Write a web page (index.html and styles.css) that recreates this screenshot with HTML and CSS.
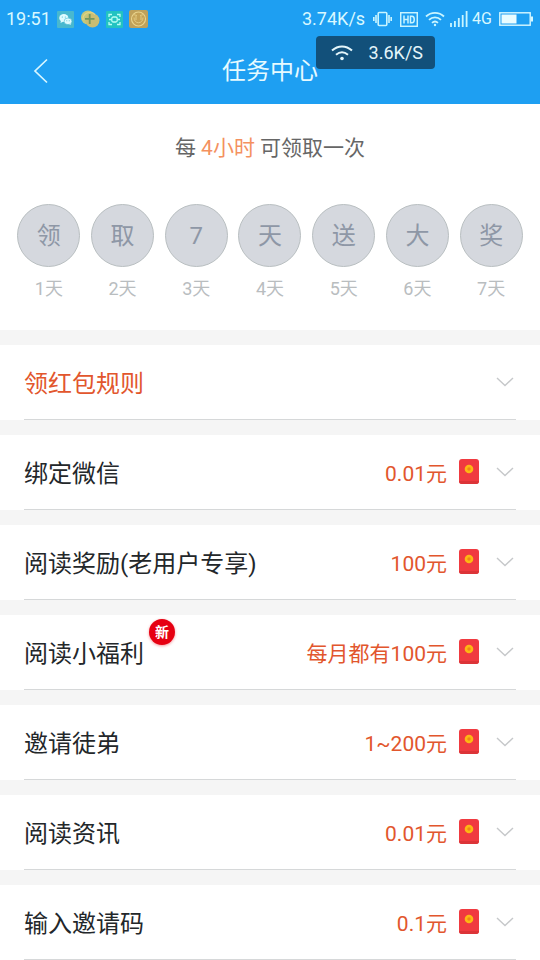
FILE: index.html
```html
<!DOCTYPE html>
<html lang="zh-CN">
<head>
<meta charset="utf-8">
<meta name="viewport" content="width=device-width, initial-scale=1">
<title>任务中心</title>
<link rel="stylesheet" href="styles.css">
</head>
<body>
<svg class="defs" aria-hidden="true">
  <symbol id="packet" viewBox="0 0 20 26">
    <rect width="20" height="25" rx="3" fill="#f03a40"/>
    <path d="M0 22v0a3 3 0 0 0 3 3h14a3 3 0 0 0 3-3v0z" fill="#dc3438"/>
    <circle cx="10" cy="10" r="4.3" fill="#fdb813"/>
    <circle cx="10" cy="10" r="1.7" fill="#f08a14"/>
  </symbol>
  <symbol id="chevron" viewBox="0 0 18 10">
    <path d="M1 1l8 7.5L17 1" fill="none" stroke="#c6c8ca" stroke-width="1.4"/>
  </symbol>
</svg>

<header class="top">
  <div class="status">
    <span class="clock">19:51</span>
    <div class="apps">
      <svg width="17" height="17" viewBox="0 0 17 17"><rect width="17" height="17" rx="1" fill="#48b8cf"/><ellipse cx="6.8" cy="7" rx="4.6" ry="4" fill="#dffbff"/><path d="M4 9.5L3.5 12l3-1.5z" fill="#dffbff"/><ellipse cx="11" cy="10.3" rx="3.9" ry="3.3" fill="#dffbff" stroke="#48b8cf" stroke-width=".6"/><path d="M12 13l1.8 1-.3-2z" fill="#dffbff"/><g fill="#48b8cf"><circle cx="5.3" cy="6" r=".6"/><circle cx="8.3" cy="6" r=".6"/><circle cx="9.8" cy="9.7" r=".5"/><circle cx="12.2" cy="9.7" r=".5"/></g></svg>
      <svg width="20" height="18" viewBox="0 0 20 18"><circle cx="8" cy="7.5" r="7" fill="#c3c97c"/><circle cx="12.5" cy="10.5" r="7" fill="#c9bd73"/><path d="M3 10a7 7 0 0 1 12-5.5" fill="none" stroke="#e5d183" stroke-width="1.2"/><path d="M9.7 4v10M5 8.8h9.5" stroke="#72975f" stroke-width="1.8"/></svg>
      <svg width="17" height="17" viewBox="0 0 17 17"><rect width="17" height="17" rx="1" fill="#22c3c1"/><g fill="none" stroke="#b8fff4" stroke-width="1.3"><path d="M3 6V3.5h3M11 3.5h3V6M14 11v2.500h-3M6 13.500H3V11"/><rect x="5.800" y="6" width="5.400" height="5" rx="1.500"/><path d="M3 8.500h2.500M11.500 8.500H14"/></g></svg>
      <svg width="19" height="18" viewBox="0 0 19 18"><rect width="19" height="18" rx="2" fill="#bfa15b"/><circle cx="9.500" cy="9" r="7" fill="#c4a256" stroke="#ead58e" stroke-width="1.100"/><path d="M4 4.500l4 1M15 4.500l-4 1M5 7.500c0 7 9 7 9 0M7 6v4M12 6v4" fill="none" stroke="#e2ca82" stroke-width="1"/></svg>
    </div>
    <span class="speed">3.74K/s</span>
    <svg class="vib" width="19" height="16" viewBox="0 0 19 16" fill="none" stroke="#c9f5ff" stroke-width="1.600"><rect x="5.200" y="1.500" width="8.600" height="13" rx="1"/><path d="M3 4v8M16 4v8M.8 6v4M18.200 6v4"/></svg>
    <svg class="hd" width="18" height="15" viewBox="0 0 18 15" fill="none" stroke="#c9f5ff" stroke-width="1.500"><rect x=".7" y=".7" width="16.600" height="13.600"/><path d="M4 3.500v8M8 3.500v8M4 7.500h4M10.500 4.200v6.600h1.500c3 0 3-6.600 0-6.600z"/></svg>
    <svg class="wifi" width="20" height="16" viewBox="0 0 20 16" fill="none" stroke="#c9f5ff" stroke-width="1.800"><path d="M1 5.500a13 13 0 0 1 18 0M4 8.800a8.500 8.500 0 0 1 12 0M7 11.800a4.500 4.500 0 0 1 6 0"/><circle cx="10" cy="14" r="1.200" fill="#c9f5ff" stroke="none"/></svg>
    <svg class="signal" width="18" height="16" viewBox="0 0 18 16" fill="none" stroke="#c9f5ff" stroke-width="1.800"><path d="M1 12v4M4.900 10v6M8.800 7v9M12.700 4v12M16.600 0v16"/></svg>
    <span class="net">4G</span>
    <svg class="battery" width="35" height="14" viewBox="0 0 35 14"><rect x=".8" y=".8" width="30.400" height="12.400" fill="none" stroke="#d7f8ff" stroke-width="1.400"/><rect x="2.500" y="2.500" width="15" height="9" fill="#e9fcff"/><path d="M33 4.500v5" stroke="#d7f8ff" stroke-width="2"/></svg>
  </div>
  <nav class="bar">
    <a class="back" href="#" aria-label="返回"><svg width="16" height="26" viewBox="0 0 16 26"><path d="M14 1.500L2 13l12 11.500" fill="none" stroke="#d8f6ff" stroke-width="1.700"/></svg></a>
    <h1>任务中心</h1>
  </nav>
  <div class="meter">
    <svg width="22" height="16" viewBox="0 0 22 16" fill="none" stroke="#e4f6fb" stroke-width="2"><path d="M1 5.500c6-5.500 14-5.500 20 0M5 9.800c3.700-3.200 8.300-3.200 12 0"/><circle cx="11" cy="13.500" r="1.800" fill="#e4f6fb" stroke="none"/></svg>
    <span>3.6K/S</span>
  </div>
</header>

<main>
  <section class="checkin">
    <p class="tip">每 <em>4小时</em> 可领取一次</p>
    <ol class="days">
      <li><span class="coin">领</span><span class="day">1天</span></li>
      <li><span class="coin">取</span><span class="day">2天</span></li>
      <li><span class="coin">7</span><span class="day">3天</span></li>
      <li><span class="coin">天</span><span class="day">4天</span></li>
      <li><span class="coin">送</span><span class="day">5天</span></li>
      <li><span class="coin">大</span><span class="day">6天</span></li>
      <li><span class="coin">奖</span><span class="day">7天</span></li>
    </ol>
  </section>

  <ul class="tasks">
    <li><button class="task rules" type="button"><span class="name">领红包规则</span><svg class="arrow"><use href="#chevron"/></svg></button></li>
    <li><button class="task" type="button"><span class="name">绑定微信</span><span class="reward">0.01元</span><svg class="packet"><use href="#packet"/></svg><svg class="arrow"><use href="#chevron"/></svg></button></li>
    <li><button class="task" type="button"><span class="name">阅读奖励(老用户专享)</span><span class="reward">100元</span><svg class="packet"><use href="#packet"/></svg><svg class="arrow"><use href="#chevron"/></svg></button></li>
    <li><button class="task" type="button"><span class="name">阅读小福利<span class="badge">新</span></span><span class="reward">每月都有100元</span><svg class="packet"><use href="#packet"/></svg><svg class="arrow"><use href="#chevron"/></svg></button></li>
    <li><button class="task" type="button"><span class="name">邀请徒弟</span><span class="reward">1~200元</span><svg class="packet"><use href="#packet"/></svg><svg class="arrow"><use href="#chevron"/></svg></button></li>
    <li><button class="task" type="button"><span class="name">阅读资讯</span><span class="reward">0.01元</span><svg class="packet"><use href="#packet"/></svg><svg class="arrow"><use href="#chevron"/></svg></button></li>
    <li><button class="task" type="button"><span class="name">输入邀请码</span><span class="reward">0.1元</span><svg class="packet"><use href="#packet"/></svg><svg class="arrow"><use href="#chevron"/></svg></button></li>
  </ul>
</main>
</body>
</html>
```
FILE: styles.css
```css
* {
  box-sizing: border-box;
}

body {
  margin: 0;
  background: #f5f5f5;
  color: #23272a;
  font-family: Roboto, "Noto Sans CJK SC", sans-serif;
}

svg {
  display: block;
  flex: none;
}

.defs {
  position: absolute;
  width: 0;
  height: 0;
}

.top {
  position: relative;
  background: #1e9ff2;
  color: #d8f8ff;
}

.status {
  display: flex;
  align-items: center;
  height: 38px;
  padding: 0 6px;
  font-size: 18px;
  line-height: 24px;
}

.apps {
  display: flex;
  align-items: center;
  gap: 6px;
  margin-left: 6px;
}

.speed {
  margin-left: auto;
}

.vib {
  margin-left: 8px;
}

.hd {
  margin-left: 8px;
}

.wifi {
  margin-left: 7px;
}

.signal {
  margin-left: 5px;
}

.net {
  margin-left: 4px;
  font-size: 16px;
}

.battery {
  margin-left: 7px;
}

.bar {
  display: grid;
  grid-template-columns: 1fr auto 1fr;
  align-items: center;
  height: 66px;
  padding: 0 33px;
}

.back {
  justify-self: start;
}

.bar h1 {
  margin: 0;
  color: #e6faff;
  font-size: 24px;
  font-weight: 400;
  line-height: 36px;
}

.meter {
  position: absolute;
  top: 36px;
  right: 105px;
  display: flex;
  align-items: center;
  gap: 16px;
  padding: 5px 12px 4px 15px;
  border-radius: 4px;
  background: #12507a;
  color: #e4f6fb;
  font-size: 18px;
  line-height: 24px;
}

.checkin {
  padding: 28px 12px 27px;
  background: #fff;
}

.tip {
  margin: 0 0 40px;
  color: #666;
  font-size: 21px;
  line-height: 32px;
  text-align: center;
}

.tip em {
  color: #f4915f;
  font-style: normal;
}

.days {
  display: grid;
  grid-template-columns: repeat(7, 1fr);
  margin: 0;
  padding: 0;
  list-style: none;
}

.days li {
  display: flex;
  flex-direction: column;
  align-items: center;
  gap: 8px;
}

.coin {
  display: grid;
  place-items: center;
  width: 63px;
  height: 63px;
  border: 1px solid #b9bfc1;
  border-radius: 50%;
  background: #d5d8de;
  color: #8e97a6;
  font-size: 24px;
  line-height: 32px;
}

.day {
  color: #b9bdbf;
  font-size: 18px;
  line-height: 28px;
}

.tasks {
  display: grid;
  gap: 15px;
  margin: 15px 0 0;
  padding: 0;
  list-style: none;
}

.tasks li {
  padding: 0 24px;
  background: #fff;
}

.task {
  display: flex;
  align-items: center;
  width: 100%;
  height: 75px;
  padding: 0 2px 0 0;
  border: 0;
  border-bottom: 1px solid #d6d8d9;
  background: none;
  color: inherit;
  font: inherit;
  text-align: left;
}

.name {
  position: relative;
  margin-right: auto;
  padding-top: 4px;
  font-size: 24px;
  line-height: 36px;
}

.rules .name {
  color: #e2562d;
}

.reward {
  padding-top: 4px;
  color: #e2562d;
  font-size: 21px;
  line-height: 32px;
}

.packet {
  width: 20px;
  height: 26px;
  margin: 0 17px 0 12px;
}

.arrow {
  width: 18px;
  height: 10px;
}

.badge {
  position: absolute;
  top: -13px;
  left: 100%;
  width: 26px;
  height: 26px;
  margin-left: 5px;
  border-radius: 50%;
  background: #e60012;
  box-shadow: 0 1px 3px #e6001266;
  color: #fff;
  font-size: 14px;
  font-weight: 700;
  line-height: 26px;
  text-align: center;
}
```
